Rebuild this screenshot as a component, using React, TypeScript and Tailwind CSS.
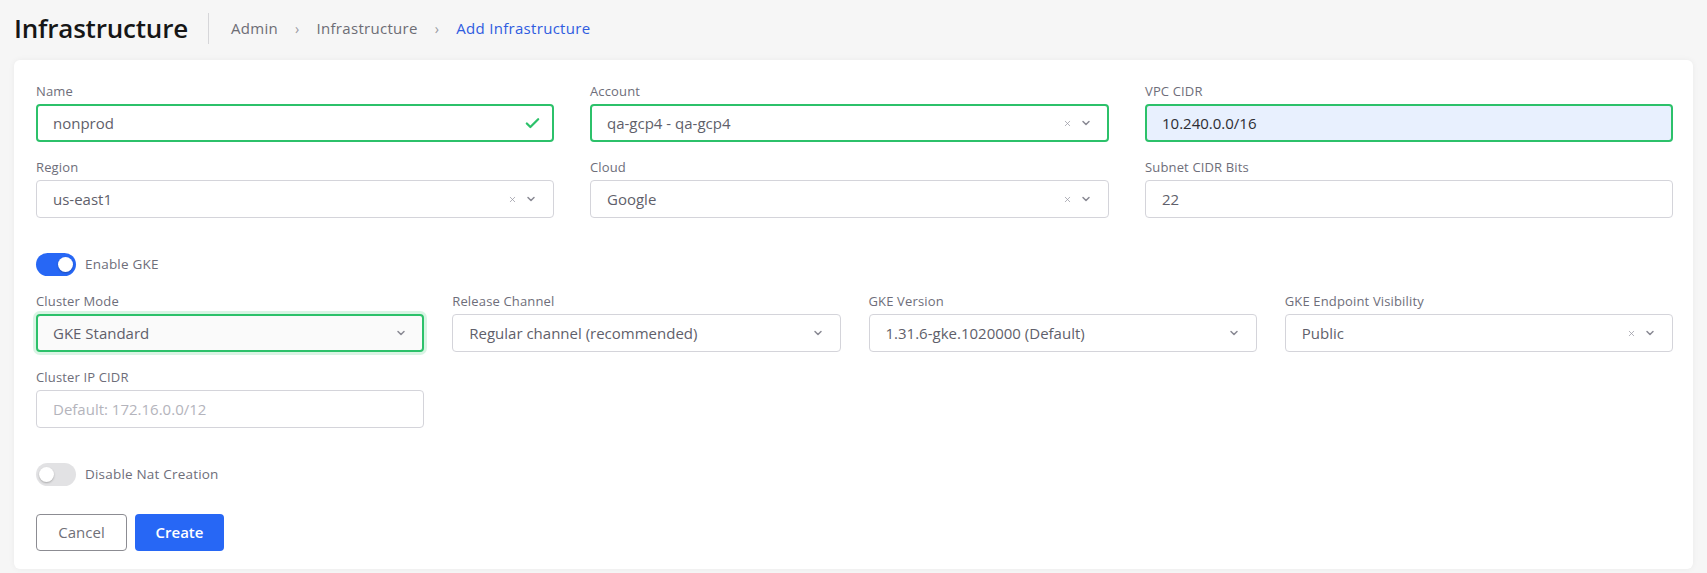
import { Check, ChevronDown, X } from 'lucide-react';

// Add Infrastructure form (GCP / GKE)

function Label({ children }: { children: React.ReactNode }) {
  return <div className="mb-[4px] text-[13px] leading-[17px] tracking-[0.15px] text-[#6e6e7a]">{children}</div>;
}

function Select({ value, clearable = true, green = false, focused = false }: { value: string; clearable?: boolean; green?: boolean; focused?: boolean }) {
  const border = focused
    ? 'border-2 border-[#2cc16a] bg-[#fafafa] shadow-[0_0_0_3px_rgba(44,193,106,0.18)] pl-[15px] pr-[15px]'
    : green
      ? 'border-2 border-[#2cc16a] bg-white pl-[15px] pr-[15px]'
      : 'border border-[#d4d4da] bg-white pl-[16px] pr-[16px]';
  return (
    <div className={`flex h-[38px] items-center rounded-[4px] ${border}`}>
      <span className="flex-1 truncate text-[15px] text-[#5f5f6b]">{value}</span>
      {clearable && <X size={9} strokeWidth={2} className="mr-[8px] text-[#9a9aa4]" />}
      <ChevronDown size={12} strokeWidth={3} className="text-[#8a8a94]" />
    </div>
  );
}

function Toggle({ on, label }: { on: boolean; label: string }) {
  return (
    <div className="flex items-center gap-[9px]">
      <div className={`flex h-[23px] w-[40px] items-center rounded-full px-[3px] ${on ? 'justify-end bg-[#2767f5]' : 'justify-start bg-[#e2e2e4]'}`}>
        <div className="h-[15px] w-[15px] rounded-full bg-white shadow-[0_1px_2px_rgba(0,0,0,0.25)]" />
      </div>
      <span className="text-[13.5px] tracking-[0.2px] text-[#6e6e7a]">{label}</span>
    </div>
  );
}

export default function App() {
  return (
    <div className="min-h-screen bg-[#f6f6f6] font-['Open_Sans',sans-serif]">
      <div className="flex h-[56px] items-center px-[14px]">
        <h1 className="font-['Open_Sans',sans-serif] text-[26px] font-semibold tracking-[-0.2px] text-[#161616]">Infrastructure</h1>
        <div className="ml-[20px] mr-[22px] h-[31px] w-px bg-[#d6d6d9]" />
        <nav className="flex items-center text-[15px] tracking-[0.3px] text-[#6d6d75]">
          <span>Admin</span>
          <span className="mx-[17px] text-[14px] text-[#9a9aa2]">›</span>
          <span>Infrastructure</span>
          <span className="mx-[17px] text-[14px] text-[#9a9aa2]">›</span>
          <span className="text-[#2f5ce0]">Add Infrastructure</span>
        </nav>
      </div>

      <div className="mx-[14px] mt-[4px] rounded-[6px] bg-white px-[22px] pb-[18px] pt-[23px] pr-[20px] shadow-[0_0_6px_rgba(0,0,0,0.05)]">
        <div className="grid grid-cols-[518px_519px_1fr] gap-x-[36px] gap-y-[17px]">
          <div>
            <Label>Name</Label>
            <div className="flex h-[38px] items-center rounded-[4px] border-2 border-[#2cc16a] pl-[15px] pr-[11px]">
              <span className="flex-1 text-[15px] text-[#5f5f6b]">nonprod</span>
              <Check size={17} strokeWidth={3.2} className="text-[#2cc16a]" />
            </div>
          </div>
          <div>
            <Label>Account</Label>
            <Select value="qa-gcp4 - qa-gcp4" green />
          </div>
          <div>
            <Label>VPC CIDR</Label>
            <div className="flex h-[38px] items-center rounded-[4px] border-2 border-[#2cc16a] bg-[#e8f0fe] pl-[15px]">
              <span className="text-[15px] text-[#2d2d33]">10.240.0.0/16</span>
            </div>
          </div>
          <div>
            <Label>Region</Label>
            <Select value="us-east1" />
          </div>
          <div>
            <Label>Cloud</Label>
            <Select value="Google" />
          </div>
          <div>
            <Label>Subnet CIDR Bits</Label>
            <div className="flex h-[38px] items-center rounded-[4px] border border-[#d4d4da] pl-[16px]">
              <span className="text-[15px] text-[#5f5f6b]">22</span>
            </div>
          </div>
        </div>

        <div className="mt-[35px]">
          <Toggle on label="Enable GKE" />
        </div>

        <div className="mt-[17px] grid grid-cols-4 gap-x-[28px] gap-y-[17px]">
          <div>
            <Label>Cluster Mode</Label>
            <Select value="GKE Standard" clearable={false} focused />
          </div>
          <div>
            <Label>Release Channel</Label>
            <Select value="Regular channel (recommended)" clearable={false} />
          </div>
          <div>
            <Label>GKE Version</Label>
            <Select value="1.31.6-gke.1020000 (Default)" clearable={false} />
          </div>
          <div>
            <Label>GKE Endpoint Visibility</Label>
            <Select value="Public" />
          </div>
          <div>
            <Label>Cluster IP CIDR</Label>
            <div className="flex h-[38px] items-center rounded-[4px] border border-[#d4d4da] pl-[16px]">
              <span className="text-[15px] text-[#b4b4bc]">Default: 172.16.0.0/12</span>
            </div>
          </div>
        </div>

        <div className="mt-[35px]">
          <Toggle on={false} label="Disable Nat Creation" />
        </div>

        <div className="mt-[28px] flex gap-[8px]">
          <button className="h-[37px] w-[91px] rounded-[4px] border border-[#8c8c92] bg-white text-[15px] text-[#707078]">Cancel</button>
          <button className="h-[37px] w-[89px] rounded-[4px] bg-[#2767f5] text-[15px] font-semibold text-white">Create</button>
        </div>
      </div>
    </div>
  );
}
